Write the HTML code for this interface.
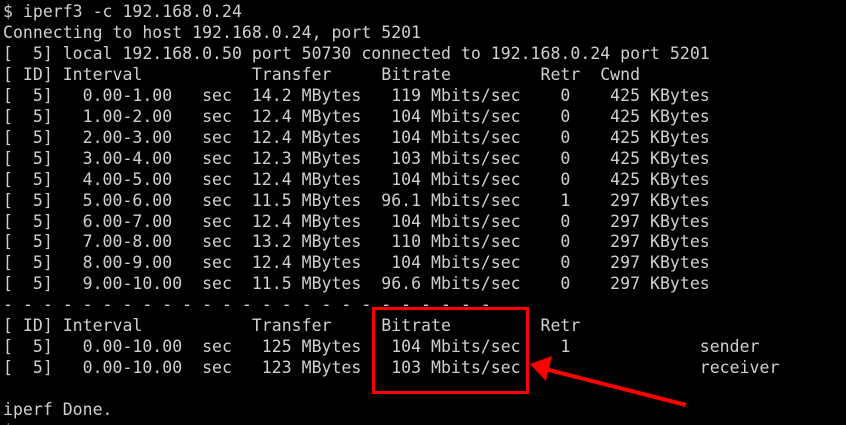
<!DOCTYPE html>
<html><head><style>
html,body{margin:0;padding:0;background:#000;width:846px;height:425px;overflow:hidden;position:relative}
pre{margin:0;position:absolute;left:3px;top:2px;font-family:"DejaVu Sans Mono","Liberation Mono",monospace;font-size:16.5px;line-height:20.95px;color:#d0d0d0;letter-spacing:0.02px}
.g{color:#7fc92e}
</style></head><body>
<pre>$ iperf3 -c 192.168.0.24
Connecting to host 192.168.0.24, port 5201
[  5] local 192.168.0.50 port 50730 connected to 192.168.0.24 port 5201
[ ID] Interval           Transfer     Bitrate         Retr  Cwnd
[  5]   0.00-1.00   sec  14.2 MBytes   119 Mbits/sec    0    425 KBytes
[  5]   1.00-2.00   sec  12.4 MBytes   104 Mbits/sec    0    425 KBytes
[  5]   2.00-3.00   sec  12.4 MBytes   104 Mbits/sec    0    425 KBytes
[  5]   3.00-4.00   sec  12.3 MBytes   103 Mbits/sec    0    425 KBytes
[  5]   4.00-5.00   sec  12.4 MBytes   104 Mbits/sec    0    425 KBytes
[  5]   5.00-6.00   sec  11.5 MBytes  96.1 Mbits/sec    1    297 KBytes
[  5]   6.00-7.00   sec  12.4 MBytes   104 Mbits/sec    0    297 KBytes
[  5]   7.00-8.00   sec  13.2 MBytes   110 Mbits/sec    0    297 KBytes
[  5]   8.00-9.00   sec  12.4 MBytes   104 Mbits/sec    0    297 KBytes
[  5]   9.00-10.00  sec  11.5 MBytes  96.6 Mbits/sec    0    297 KBytes
- - - - - - - - - - - - - - - - - - - - - - - - -
[ ID] Interval           Transfer     Bitrate         Retr
[  5]   0.00-10.00  sec   125 MBytes   104 Mbits/sec    1             sender
[  5]   0.00-10.00  sec   123 MBytes   103 Mbits/sec                  receiver

iperf Done.
<span class="g">$ ~ . . . . . . . . ~</span></pre>
<svg width="846" height="425" style="position:absolute;left:0;top:0">
<rect x="373.5" y="308.5" width="154" height="84" fill="none" stroke="#f00" stroke-width="3"/>
<line x1="686" y1="405" x2="545" y2="369" stroke="#f00" stroke-width="4"/>
<polygon points="530,364 552,356 546,381" fill="#f00"/>
</svg>
</body></html>
